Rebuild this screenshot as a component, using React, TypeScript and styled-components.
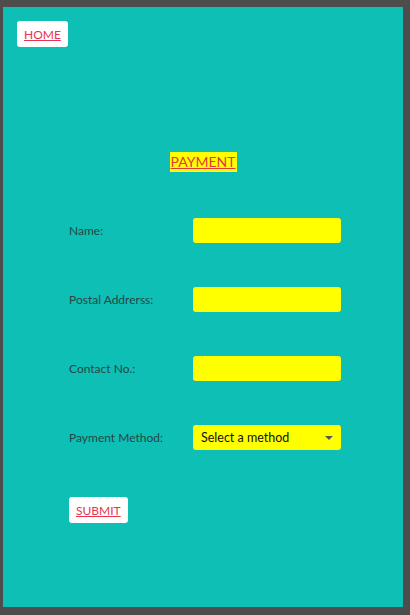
import React from "react";
import styled, { createGlobalStyle } from "styled-components";

const Global = createGlobalStyle`
  html, body { margin: 0; padding: 0; }
  body {
    background: #4d4d4d;
    font-family: Lato, "Noto Sans", sans-serif;
  }
`;

const Frame = styled.div`
  width: 410px;
  height: 615px;
  padding: 7px 0 0 3px;
  box-sizing: border-box;
`;

const Panel = styled.div`
  width: 400px;
  height: 600px;
  background: #0ebfb5;
  box-sizing: border-box;
  padding: 14px 0 0 14px;
  display: flex;
  flex-direction: column;
`;

const LinkButton = styled.a`
  align-self: flex-start;
  display: inline-flex;
  align-items: center;
  justify-content: center;
  height: 26px;
  padding: 0 7px;
  background: #ffffff;
  border-radius: 3px;
  color: #e8344c;
  font-size: 12px;
  text-decoration: underline;
  cursor: pointer;
  box-sizing: border-box;
`;

const HeadingRow = styled.div`
  display: flex;
  justify-content: center;
  padding-right: 13px;
  margin-top: 105px;
`;

const Heading = styled.h1`
  margin: 0;
  background: #ffff00;
  color: #e53a36;
  font-size: 14px;
  font-weight: 400;
  line-height: 20px;
  padding: 0 2px 0 1px;
  text-decoration: underline;
`;

const Form = styled.form`
  display: flex;
  flex-direction: column;
  gap: 44px;
  margin: 46px 0 0 52px;
`;

const Row = styled.div`
  display: flex;
  align-items: center;
  height: 25px;
`;

const Label = styled.label`
  width: 124px;
  font-size: 12px;
  color: #264545;
`;

const Input = styled.input`
  width: 148px;
  height: 25px;
  box-sizing: border-box;
  border: none;
  border-radius: 3px;
  background: #ffff00;
  outline: none;
`;

const Select = styled.div`
  width: 148px;
  height: 25px;
  box-sizing: border-box;
  border-radius: 3px;
  background: #ffff00;
  display: flex;
  align-items: center;
  justify-content: space-between;
  padding: 0 8px 0 8px;
  font-size: 12.5px;
  color: #111;
`;

const Caret = styled.span`
  width: 0;
  height: 0;
  border-left: 4px solid transparent;
  border-right: 4px solid transparent;
  border-top: 4px solid #555;
`;

const Submit = styled(LinkButton)`
  margin-top: 3px;
`;

export default function App() {
  return (
    <Frame>
      <Global />
      <Panel>
        <LinkButton>HOME</LinkButton>
        <HeadingRow>
          <Heading>PAYMENT</Heading>
        </HeadingRow>
        <Form>
          <Row>
            <Label>Name:</Label>
            <Input />
          </Row>
          <Row>
            <Label>Postal Addrerss:</Label>
            <Input />
          </Row>
          <Row>
            <Label>Contact No.:</Label>
            <Input />
          </Row>
          <Row>
            <Label>Payment Method:</Label>
            <Select>
              <span>Select a method</span>
              <Caret />
            </Select>
          </Row>
          <Submit>SUBMIT</Submit>
        </Form>
      </Panel>
    </Frame>
  );
}
